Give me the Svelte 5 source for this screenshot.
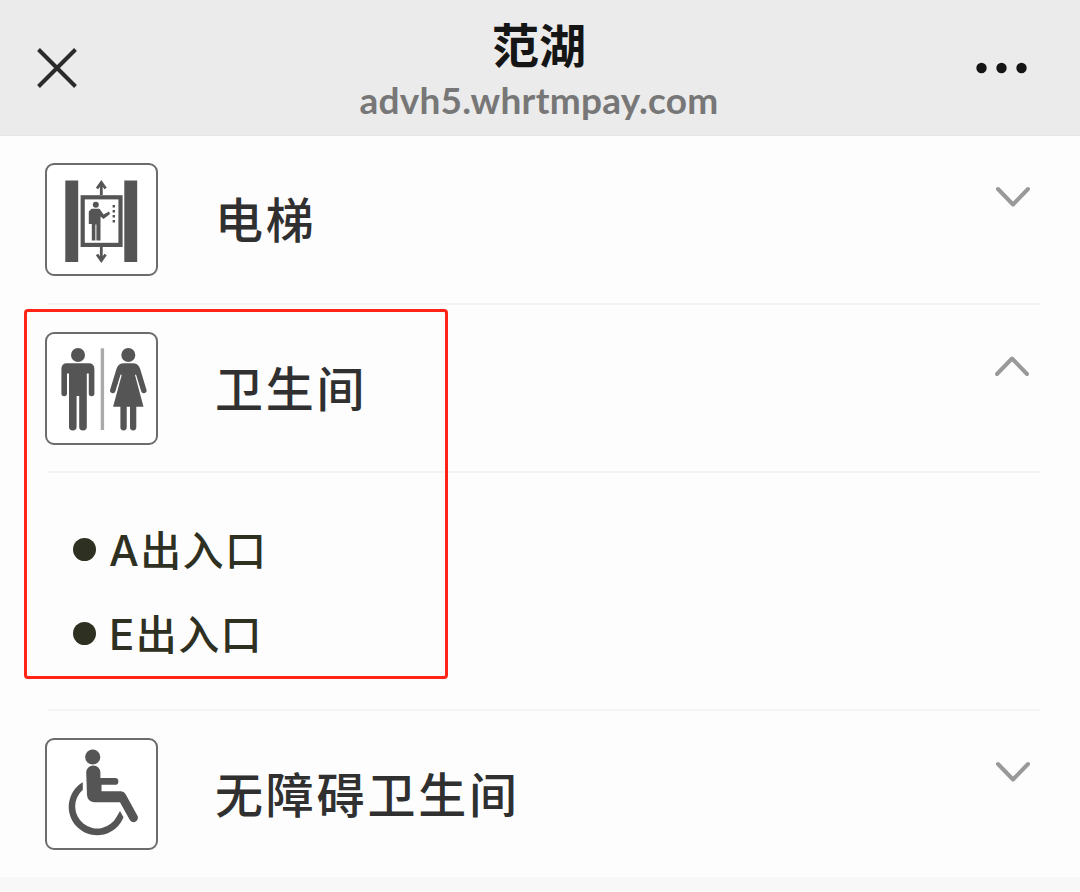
<script>
    const title = '范湖';
    const host = 'advh5.whrtmpay.com';

    let facilities = $state([
        { id: 'lift', name: '电梯', open: false, exits: [] },
        { id: 'toilet', name: '卫生间', open: true, exits: ['A', 'E'] },
        { id: 'accessible', name: '无障碍卫生间', open: false, exits: [] }
    ]);

    function toggle(item) {
        item.open = !item.open;
    }
</script>

<div class="page">
    <header class="navbar">
        <svg class="close" width="42" height="42" viewBox="0 0 42 42">
            <path d="M2.5 2.5L39.5 39.5M39.5 2.5L2.5 39.5" />
        </svg>
        <div class="heading">
            <h1>{title}</h1>
            <p>{host}</p>
        </div>
        <svg class="more" width="52" height="12" viewBox="0 0 52 12">
            <circle cx="5.5" cy="6" r="5.2" />
            <circle cx="25.5" cy="6" r="5.2" />
            <circle cx="45.5" cy="6" r="5.2" />
        </svg>
    </header>

    <main class="list">
        {#each facilities as item (item.id)}
            <section class="facility">
                <!-- svelte-ignore a11y_click_events_have_key_events -->
                <!-- svelte-ignore a11y_no_static_element_interactions -->
                <div class="row" onclick={() => toggle(item)}>
                    <svg class="sign" width="113" height="113" viewBox="0 0 113 113">
                        <rect class="frame" x="1" y="1" width="111" height={item.id === 'accessible' ? 110 : 111} rx="8" />
                        {#if item.id === 'lift'}
                            <path d="M20.3 17.5H33.2V99H20.3zM79.3 17.5H92.2V99H79.3z" />
                            <rect class="line cab" x="37.7" y="34.3" width="37.8" height="47.6" />
                            <path class="line arrow" d="M56.3 32V20M52 25.5L56.3 19.5L60.6 25.5M56.3 84V97M52 91.5L56.3 97.5L60.6 91.5" />
                            <circle cx="50.8" cy="41.8" r="3" />
                            <path d="M46.5 45.7H54.5L58.5 51.5L64 48.5L65 51L58.5 56L55.5 53.5V77.5H51.4V61.5H50.4V77.5H46.8V61H43.8V48.5z" />
                            <path class="line dots" d="M68.8 42V60" />
                        {:else if item.id === 'toilet'}
                            <circle cx="33" cy="23" r="7" />
                            <path d="M22 31.3H43.7Q49.4 31.3 49.4 37V61.5A2.8 2.8 0 0 1 43.8 61.5V41.5H41.8V94.7A3.7 3.7 0 0 1 34.2 94.7V64H31.6V94.7A3.7 3.7 0 0 1 24 94.7V41.5H22V61.5A2.8 2.8 0 0 1 16.4 61.5V37Q16.4 31.3 22 31.3z" />
                            <path class="divider" d="M57.4 16.3V98" />
                            <circle cx="83.3" cy="23" r="7" />
                            <path d="M79 31.3H87.6Q93.2 31.3 95 36.5L101.4 57.5A2.7 2.7 0 0 1 96.2 59.3L91 42.5L90 43L98.5 74.7H91.3V95.3A3.1 3.1 0 0 1 85 95.3V74.7H81.7V95.3A3.1 3.1 0 0 1 75.4 95.3V74.7H68.1L76.7 43L75.6 42.5L70.4 59.3A2.7 2.7 0 0 1 65.2 57.5L71.6 36.5Q73.4 31.3 79 31.3z" />
                        {:else}
                            <circle cx="47.7" cy="19" r="7.6" />
                            <path d="M41.2 34.5A7.1 7.1 0 0 1 55.4 34.5V40H70A3.4 3.4 0 0 1 70 46.8H56.5V53.3H76Q79 53.3 80.5 56L92.3 77.5A4.3 4.3 0 0 1 84.8 82.1L75 64.3H49Q42.5 63.5 42 57z" />
                            <path d="M37.8 44.3V51.8A22 22 0 1 0 71.8 78.4L75 73L78.5 79.3A28.4 28.4 0 1 1 37.8 44.3z" />
                        {/if}
                    </svg>
                    <span class="name">{item.name}</span>
                    <svg class="chevron" class:up={item.open} width="36" height="22" viewBox="0 0 36 22">
                        <path d="M3 3L18 18.5L33 3" />
                    </svg>
                </div>
                {#if item.open}
                    <ul class="exits">
                        {#each item.exits as exit}
                            <li><i class="bullet"></i><span class="exit"><span class="letter">{exit}</span>出入口</span></li>
                        {/each}
                    </ul>
                {/if}
            </section>
        {/each}
    </main>
    <div class="highlight"></div>
</div>

<style>
    :global(body) {
        background: #f8f8f8;
    }

    .page {
        position: relative;
        width: 1080px;
        height: 892px;
        overflow: hidden;
        font-family: "Noto Sans CJK SC", sans-serif;
        color: #303030;
    }

    .navbar {
        display: flex;
        box-sizing: border-box;
        height: 136px;
        padding: 0 52px 0 36px;
        background: #ebebeb;
        border-bottom: 1px solid #e6e6e6;
    }

    .close {
        margin-top: 47px;
        fill: none;
        stroke: #2b2b2b;
        stroke-width: 4;
    }

    .heading {
        flex: 1;
        padding: 9px 0 0 24px;
        text-align: center;
    }

    h1 {
        margin: 0;
        font-size: 47px;
        line-height: 68px;
        font-weight: 700;
        color: #151515;
    }

    p {
        margin: 0;
        font-family: Lato, sans-serif;
        font-size: 37px;
        line-height: 46px;
        font-weight: 700;
        letter-spacing: 0.25px;
        color: #777;
    }

    .more {
        margin-top: 62px;
        fill: #151515;
    }

    .list {
        background: #fdfdfd;
    }

    .row {
        display: flex;
        align-items: flex-start;
        box-sizing: border-box;
        height: 168px;
        margin: 0 40px 0 48px;
        padding-top: 27px;
        border-bottom: 2px solid #f4f4f4;
    }

    .facility:first-child .row {
        height: 169px;
    }

    .facility:last-child .row {
        height: 166px;
        border-bottom: none;
    }

    .sign {
        flex: none;
        margin-left: -3px;
        fill: #555;
    }

    .frame {
        fill: #fff;
        stroke: #6c6c6c;
        stroke-width: 2;
    }

    .line {
        fill: none;
        stroke: #555;
    }

    .cab {
        stroke-width: 4.2;
    }

    .arrow {
        stroke-width: 2.8;
    }

    .dots {
        stroke-width: 2.4;
        stroke-dasharray: 2.4 2.6;
    }

    .divider {
        stroke: #aaa;
        stroke-width: 3.4;
    }

    .name {
        flex: 1;
        margin-left: 57px;
        font-size: 48px;
        line-height: 109px;
        font-weight: 500;
        letter-spacing: 2.8px;
    }

    .chevron {
        margin: 23px 9px 0 0;
        fill: none;
        stroke: #999;
        stroke-width: 4;
        stroke-linecap: round;
        stroke-linejoin: round;
    }

    .chevron.up {
        margin-right: 10px;
        transform: rotate(180deg);
    }

    .exits {
        display: flex;
        flex-direction: column;
        box-sizing: border-box;
        height: 238px;
        margin: 0 40px 0 48px;
        padding: 34px 0 0 25px;
        list-style: none;
        border-bottom: 2px solid #f4f4f4;
    }

    .exits li {
        display: flex;
        align-items: center;
        height: 84px;
        color: #2e3022;
    }

    .exit {
        font-size: 41px;
        line-height: 60px;
        font-weight: 500;
        letter-spacing: 1.4px;
        margin-top: -3px;
    }

    .letter {
        font-family: Inter, sans-serif;
        font-size: 42px;
        line-height: 1;
    }

    .bullet {
        width: 23px;
        height: 23px;
        margin-right: 13px;
        border-radius: 50%;
        background: #2e3022;
    }

    /* marker frame drawn over the list */
    .highlight {
        position: absolute;
        left: 24px;
        top: 309px;
        box-sizing: border-box;
        width: 424px;
        height: 370px;
        border: 3px solid #ff2416;
        border-radius: 4px;
        pointer-events: none;
    }
</style>
